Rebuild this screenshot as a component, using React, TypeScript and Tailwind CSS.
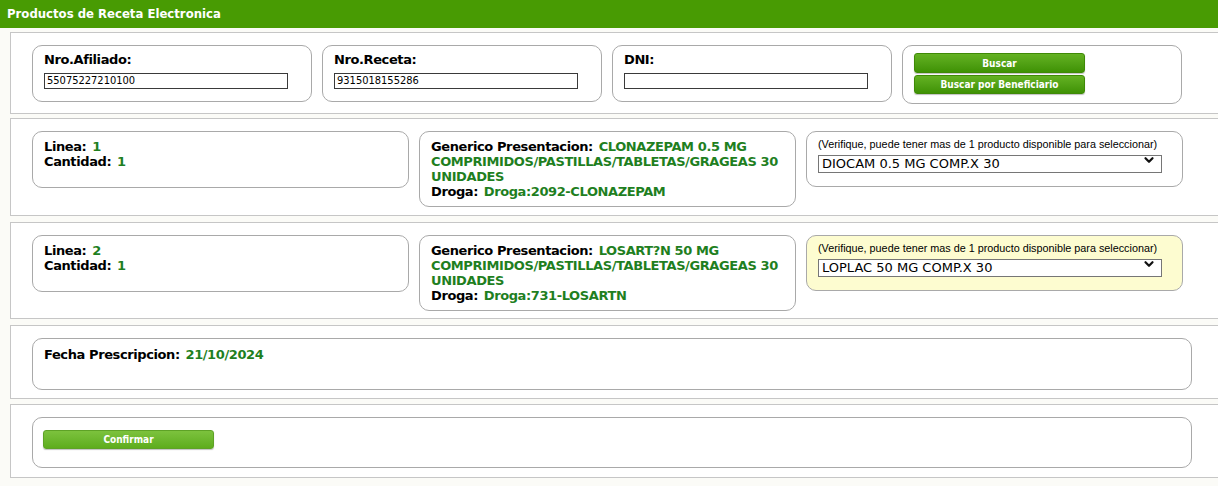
import { ChevronDown } from 'lucide-react';

const label = "font-bold text-black mr-[2px]";
const value = "font-bold text-[#1f7f1f]";
const texto = "text-[13px] leading-[15px] tracking-[-0.4px]";

type Linea = {
  linea: number;
  cantidad: number;
  presentacion: string;
  droga: string;
  producto: string;
  marcado?: boolean;
};

const lineas: Linea[] = [
  {
    linea: 1,
    cantidad: 1,
    presentacion: 'CLONAZEPAM 0.5 MG COMPRIMIDOS/PASTILLAS/TABLETAS/GRAGEAS 30 UNIDADES',
    droga: 'Droga:2092-CLONAZEPAM',
    producto: 'DIOCAM 0.5 MG COMP.X 30',
  },
  {
    linea: 2,
    cantidad: 1,
    presentacion: 'LOSART?N 50 MG COMPRIMIDOS/PASTILLAS/TABLETAS/GRAGEAS 30 UNIDADES',
    droga: 'Droga:731-LOSARTN',
    producto: 'LOPLAC 50 MG COMP.X 30',
    marcado: true,
  },
];

function Campo({ titulo, valor }: { titulo: string; valor: string }) {
  return (
    <div className="w-[280px] h-[57px] rounded-[10px] border border-[#a9a9a9] bg-white pl-[11px] pt-[6px]">
      <div className={`font-bold text-black ${texto}`}>{titulo}</div>
      <input
        type="text"
        defaultValue={valor}
        className="mt-[2px] w-[244px] h-[16px] border border-[#3a3a3a] px-[2px] text-[11px] leading-[14px] text-black outline-none"
        style={{ fontFamily: 'Tahoma, "DejaVu Sans Condensed", "DejaVu Sans", sans-serif' }}
      />
    </div>
  );
}

function BotonVerde({ children, h }: { children: string; h: string }) {
  return (
    <button
      className={`w-[171px] ${h} rounded-[3px] border border-[#3f8a06] bg-gradient-to-b from-[#64b222] to-[#3f9204] text-white text-[10px] font-bold shadow-[0_1px_1px_rgba(0,0,0,0.25)]`}
      style={{ fontFamily: '"DejaVu Sans Condensed", "DejaVu Sans", sans-serif' }}
    >
      {children}
    </button>
  );
}

function Panel({ top, className, children }: { top: string; className: string; children: React.ReactNode }) {
  return (
    <div className={`${top} w-[1212px] border border-[#c6c6c6] bg-white pl-[21px] pt-[12px] ${className}`}>
      {children}
    </div>
  );
}

export default function App() {
  return (
    <div
      className="min-h-[486px] bg-[#fbfbf7] pb-[8px]"
      style={{ fontFamily: '"DejaVu Sans", Verdana, sans-serif' }}
    >
      <div
        className="h-[28px] bg-[#489b03] px-[7px] flex items-center text-white text-[13px] font-bold"
        style={{ fontFamily: '"DejaVu Sans Condensed", "DejaVu Sans", sans-serif' }}
      >
        Productos de Receta Electronica
      </div>

      <div className="pl-[10px] flex flex-col">
        {/* busqueda */}
        <Panel top="mt-[4px]" className="pb-[9px]">
          <div className="flex items-start gap-[10px]">
            <Campo titulo="Nro.Afiliado:" valor="55075227210100" />
            <Campo titulo="Nro.Receta:" valor="9315018155286" />
            <Campo titulo="DNI:" valor="" />
            <div className="w-[280px] h-[59px] rounded-[10px] border border-[#a9a9a9] bg-white pl-[11px] pt-[7px] flex flex-col gap-[2px]">
              <BotonVerde h="h-[20px]">Buscar</BotonVerde>
              <BotonVerde h="h-[19px]">Buscar por Beneficiario</BotonVerde>
            </div>
          </div>
        </Panel>

        {lineas.map((l, i) => (
          <Panel key={l.linea} top={i === 0 ? 'mt-[4px]' : 'mt-[6px]'} className={i === 0 ? 'pb-[8px]' : 'pb-[7px]'}>
            <div className="flex items-start gap-[10px]">
              <div className={`w-[377px] h-[57px] rounded-[10px] border border-[#a9a9a9] bg-white pl-[11px] pt-[7px] ${texto}`}>
                <div>
                  <span className={label}>Linea:</span> <span className={value}>{l.linea}</span>
                </div>
                <div>
                  <span className={label}>Cantidad:</span> <span className={value}>{l.cantidad}</span>
                </div>
              </div>
              <div className={`w-[377px] h-[76px] rounded-[10px] border border-[#a9a9a9] bg-white pl-[11px] pr-[4px] pt-[7px] ${texto}`}>
                <div>
                  <span className={label}>Generico Presentacion:</span>{' '}
                  <span className={value}>{l.presentacion}</span>
                </div>
                <div>
                  <span className={label}>Droga:</span> <span className={value}>{l.droga}</span>
                </div>
              </div>
              <div
                className={`w-[377px] h-[56px] rounded-[10px] border border-[#a9a9a9] pl-[11px] pt-[6px] ${
                  l.marcado ? 'bg-[#fdfcd0]' : 'bg-white'
                }`}
              >
                <div
                  className="text-[10.8px] leading-[13px] text-black"
                  style={{ fontFamily: '"Liberation Sans", Arial, sans-serif' }}
                >
                  (Verifique, puede tener mas de 1 producto disponible para seleccionar)
                </div>
                <div className="relative w-[344px] h-[18px]">
                  <select
                    defaultValue={l.producto}
                    className="appearance-none w-full h-full border border-[#767676] bg-white pl-[3px] text-[13px] leading-[16px] text-black outline-none"
                  >
                    <option>{l.producto}</option>
                  </select>
                  <ChevronDown
                    className="absolute right-[6px] top-[2px] pointer-events-none"
                    size={14}
                    strokeWidth={3.8}
                    color="#111"
                  />
                </div>
              </div>
            </div>
          </Panel>
        ))}

        <Panel top="mt-[6px]" className="pb-[8px]">
          <div className={`w-[1160px] h-[52px] rounded-[10px] border border-[#a9a9a9] bg-white pl-[11px] pt-[8px] ${texto}`}>
            <span className={label}>Fecha Prescripcion:</span> <span className={value}>21/10/2024</span>
          </div>
        </Panel>

        <Panel top="mt-[5px]" className="pb-[9px]">
          <div className="w-[1160px] h-[51px] rounded-[10px] border border-[#a9a9a9] bg-white pl-[10px] pt-[8px]">
            <button
              className="w-[171px] h-[19px] rounded-[3px] border border-[#5ea226] bg-gradient-to-b from-[#7cc23d] to-[#5ead1c] text-white text-[10px] font-bold shadow-[0_1px_1px_rgba(0,0,0,0.25)]"
              style={{ fontFamily: '"DejaVu Sans Condensed", "DejaVu Sans", sans-serif' }}
            >
              Confirmar
            </button>
          </div>
        </Panel>
      </div>
    </div>
  );
}
